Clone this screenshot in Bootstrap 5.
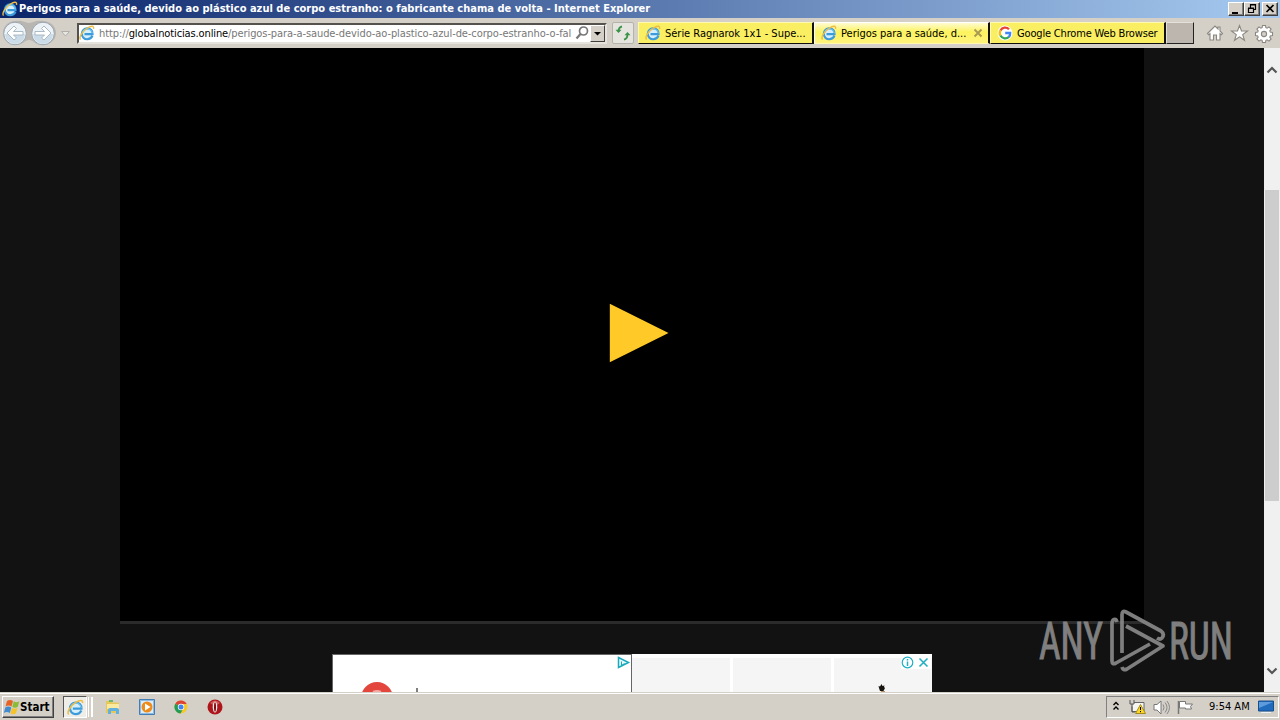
<!DOCTYPE html>
<html lang="pt">

<head>
  <meta charset="UTF-8" />
  <meta name="viewport" content="width=device-width, initial-scale=1.0" />
  <title>Internet Explorer</title>
  <link href="https://cdn.jsdelivr.net/npm/bootstrap@5.3.0/dist/css/bootstrap.min.css" rel="stylesheet" />
  <style>
    body {
      width: 1280px;
      height: 720px;
      font-family: "DejaVu Sans Condensed", "DejaVu Sans", sans-serif;
      font-stretch: condensed;
      font-size: 11px;
      line-height: 14px;
      color: #000;
      background: #d4d0c8;
    }
    svg { display: block; flex: none; }

    /* Title bar */
    .title-bar {
      height: 18px;
      padding: 0 2px;
      background: linear-gradient(90deg, #0a246a 0%, #a6caf0 100%);
    }
    .title-text { color: #fff; font-weight: bold; font-size: 11px; margin-left: 1px; letter-spacing: .02px; }
    .win-btn {
      width: 16px;
      height: 14px;
      background: #d4d0c8;
      border: 1px solid;
      border-color: #fff #404040 #404040 #fff;
      box-shadow: inset -1px -1px 0 #808080;
    }

    /* Toolbar */
    .tool-bar { height: 30px; background: #d4d0c8; }
    .address-box {
      flex: none;
      width: 530px;
      height: 21px;
      margin-left: 6px;
      background: #fff;
      border: 2px solid;
      border-color: #55524e #e6e3dd #e6e3dd #55524e;
    }
    .address-text { width: 474px; margin-left: 4px; padding-top: 2px; color: #777; letter-spacing: -.09px; }
    .address-text span { color: #000; letter-spacing: -.12px; }
    .drop-btn {
      width: 15px;
      height: 17px;
      background: #d4d0c8;
      border: 1px solid;
      border-color: #fff #404040 #404040 #fff;
    }
    .refresh-btn { flex: none; width: 22px; height: 22px; margin-left: 5px; border: 1px solid #b5b2ac; border-radius: 2px; background: #e6e4de; }
    .tab-row { flex: none; margin-left: 4px; }
    .page-tab {
      flex: none;
      width: 176px;
      height: 22px;
      padding-left: 6px;
      background: #faee62;
      border: 1px solid;
      border-color: #fff9b4 #111 #111 #fff9b4;
      border-right-width: 2px;
    }
    .page-tab.current { background: linear-gradient(#fffbd0, #fdf35e 45%, #fff37b); border-color: #fff #111 #fff6b0 #fff; }
    .tab-text { margin-left: 4px; padding-top: 2px; letter-spacing: -.02px; }
    .tab-text.tight { letter-spacing: -.17px; }
    .new-tab { width: 28px; height: 22px; background: #bdb6af; border: 1px solid; border-color: #e4e0da #222 #222 #e4e0da; }

    /* Page */
    .page-area { height: 644px; background: #121212; }
    .video-box { width: 1024px; height: 576px; margin-left: 120px; background: #000; border-bottom: 3px solid #2b2b2b; }
    .ad-row { width: 600px; height: 38px; margin: 30px 0 0 332px; background: #fff; }
    .ad-left { width: 300px; border: 1px solid #666; border-bottom: 0; }
    .ad-cells { width: 300px; background: #fff; padding-top: 4px; gap: 3px; }
    .ad-cells > div { background: #f5f5f5; flex: 1; }
    .play-mark { left: 609px; top: 255px; }
    .ad-info { left: 901px; top: 608px; }
    .run-logo { left: 1036px; top: 558px; opacity: .9; }
    .scroll-track { width: 16px; height: 644px; background: #f0f0f0; }
    .scroll-thumb { width: 14px; height: 311px; margin: 64px 0 0 1px; background: #cdcdcd; }

    /* Task bar */
    .task-bar { height: 28px; padding-top: 1px; background: #d4d0c8; border-top: 1px solid #d4d0c8; box-shadow: inset 0 1px 0 #fff; }
    .start-btn {
      width: 52px;
      height: 22px;
      margin-left: 2px;
      font-weight: bold;
      font-size: 11.5px;
      border: 1px solid;
      border-color: #fff #404040 #404040 #fff;
      box-shadow: inset -1px -1px 0 #808080;
    }
    .task-ie { width: 24px; height: 22px; margin-left: 9px; padding-left: 3px; background: #efede8; border: 1px solid; border-color: #555 #fff #fff #555; }
    .task-edge { width: 5px; height: 20px; margin-left: 1px; border-right: 2px solid #fff; border-left: 1px solid #fff; }
    .task-icons { gap: 18px; margin-left: 12px; }
    .tray-box { width: 173px; height: 22px; border: 1px solid; border-color: #808080 #fff #fff #808080; }
    .tray-clock { margin-left: 2px; }
  </style>
</head>

<body class="overflow-hidden">
  <svg width="0" height="0" class="position-absolute">
    <symbol id="ie" viewBox="0 0 16 16">
      <circle cx="8.200" cy="8.800" r="5" fill="#d7effb" />
      <path d="M13.500 10.800c-1 2.200-2.900 3.400-5.200 3.400-3.200 0-5.500-2.300-5.500-5.400s2.300-5.400 5.400-5.400c3.500 0 5.600 2.400 5.400 5.700H5.500" fill="none" stroke="#3b9bdb" stroke-width="2.100" />
      <path d="M3.200 8.500C3.500 5.500 5.500 3.800 8.300 3.800s4.600 1.700 5 4.500" fill="none" stroke="#86d4f6" stroke-width=".9" />
      <path d="M1.600 14.600C-.6 12.300 3.500 6.300 8.500 3c3.500-2.300 6.800-2.500 6 .9" fill="none" stroke="#edbd45" stroke-width="1.400" />
    </symbol>
  </svg>

  <!-- Title bar -->
  <div class="title-bar d-flex align-items-center">
    <svg width="16" height="16"><use href="#ie" /></svg>
    <div class="title-text text-nowrap">Perigos para a saúde, devido ao plástico azul de corpo estranho: o fabricante chama de volta - Internet Explorer</div>
    <div class="d-flex ms-auto">
      <div class="win-btn"><svg width="14" height="12"><path d="M3 9h6v2H3z" /></svg></div>
      <div class="win-btn"><svg width="14" height="12"><path d="M5.500 4.500V1.500h5v5H9M5 2h6M3.500 5.500h5v4h-5zM3 5h6" fill="none" stroke="#000" stroke-width="1.200" /></svg></div>
      <div class="win-btn" style="margin-left: 2px"><svg width="14" height="12"><path d="M3.500 2l7 7M10.500 2l-7 7" stroke="#000" stroke-width="1.700" /></svg></div>
    </div>
  </div>

  <!-- Toolbar -->
  <div class="tool-bar d-flex align-items-center">
    <svg width="71" height="30">
      <path d="M15 3c8-1 10 2 14 2s6-3 14-2a13 12 0 0 1 0 24c-8 0-10-5-14-5s-6 5-14 5A12 12 0 0 1 15 3z" fill="#b9b6b2" />
      <g fill="#edf2f6" stroke="#9aa5ae"><circle cx="15" cy="15.500" r="11.300" /><circle cx="43" cy="15.500" r="11.300" /></g>
      <path d="M5 16a10 10 0 0 0 20 0zM33 16a10 10 0 0 0 20 0z" fill="#cbdce8" />
      <g fill="#fff" stroke="#a3b3c0" stroke-width=".9"><path d="M7 15l7-7 2.500 2.500-3 3H23v3.500h-9.500l3 3L14 22z" /><path d="M51 15l-7-7-2.500 2.500 3 3H35v3.500h9.500l-3 3L44 22z" /></g>
      <path d="M61.500 13.500h8l-4 4.500z" fill="#e8e6e2" stroke="#b2aeab" />
    </svg>
    <div class="address-box d-flex align-items-center">
      <svg width="16" height="16"><use href="#ie" /></svg>
      <div class="address-text text-nowrap">http://<span>globalnoticias.online</span>/perigos-para-a-saude-devido-ao-plastico-azul-de-corpo-estranho-o-fal</div>
      <svg class="ms-auto" width="15" height="16"><circle cx="8.500" cy="6" r="4" fill="#fff" stroke="#777" stroke-width="1.700" /><path d="M5.500 9L1.500 13.500" stroke="#777" stroke-width="2.200" /></svg>
      <div class="drop-btn"><svg width="13" height="15"><path d="M3 6h7L6.500 9.500z" /></svg></div>
    </div>
    <div class="refresh-btn"><svg width="20" height="20" fill="none" stroke="#3a9348" stroke-width="1.800"><path d="M9 3.500Q5.500 4 5.500 9M11 16.500q3.500-.5 3.500-5.500" /><path d="M2.500 6.800h6L5.500 10zM11.500 12.200h6l-3-3.200z" fill="#3a9348" stroke="none" /></svg></div>
    <div class="tab-row d-flex">
      <div class="page-tab d-flex align-items-center"><svg width="16" height="16"><use href="#ie" /></svg><span class="tab-text text-nowrap">Série Ragnarok 1x1 - Supe...</span></div>
      <div class="page-tab current d-flex align-items-center"><svg width="16" height="16"><use href="#ie" /></svg><span class="tab-text text-nowrap">Perigos para a saúde, d...</span><svg class="ms-auto" style="margin-right: 5px" width="10" height="10"><path d="M1.500 1.500l7 7M8.500 1.500l-7 7" stroke="#a99b53" stroke-width="2" /></svg></div>
      <div class="page-tab d-flex align-items-center">
        <svg width="16" height="16" fill="none" stroke-width="2.300"><circle cx="8" cy="8" r="7.500" fill="#fff" /><path d="M12 4.200A5.300 5.300 0 0 0 3.500 5.500" stroke="#e94335" /><path d="M3.500 5.300a5.300 5.300 0 0 0 0 5.400" stroke="#fbbc05" /><path d="M3.500 10.500a5.300 5.300 0 0 0 8.500 1.300" stroke="#34a853" /><path d="M11.700 12A5 5 0 0 0 13.200 8H8.200" stroke="#4285f4" /></svg>
        <span class="tab-text tight text-nowrap">Google Chrome Web Browser</span>
      </div>
      <div class="new-tab"></div>
    </div>
    <svg class="ms-auto" width="70" height="20" fill="#fff" stroke="#8b8780" stroke-width="1.100">
      <path d="M1.500 10.500L9 3l3 3V4h2v4l2.500 2.500-1.200 1.200-1.300-1V17h-3.500v-5h-3v5H4v-6.300l-1.300 1z" />
      <path d="M33.500 2.500l2 5.500h6l-4.800 3.600 1.800 5.700-5-3.500-5 3.500 1.800-5.700L25.500 8h6z" />
      <path d="M56.500 2.500h3l.4 2.200 1.200.5 1.900-1.300 2.100 2.100-1.300 1.900.5 1.200 2.200.4v3l-2.200.4-.5 1.200 1.300 1.900-2.100 2.100-1.900-1.300-1.200.5-.4 2.200h-3l-.4-2.200-1.200-.5-1.900 1.300-2.100-2.100 1.300-1.900-.5-1.200-2.200-.4v-3l2.200-.4.5-1.200-1.300-1.900 2.100-2.100 1.900 1.300 1.200-.5z" />
      <circle cx="58" cy="11" r="2.600" fill="#d4d0c8" />
    </svg>
    <div style="width: 4px"></div>
  </div>

  <!-- Page -->
  <div class="page-area d-flex position-relative">
    <div class="flex-grow-1 overflow-hidden">
      <div class="video-box"></div>
      <div class="ad-row d-flex">
        <div class="ad-left bg-white d-flex">
          <svg width="298" height="37">
            <circle cx="44" cy="43" r="16" fill="#e2463c" />
            <path d="M40 37q4-2 8 0" fill="none" stroke="#f6aaa3" stroke-width="2" />
            <path d="M84 33v4" stroke="#555" stroke-width="1.500" />
            <path d="M285.500 2.500v10l10-5z" fill="#e8f9fb" stroke="#18a9bd" stroke-width="1.500" /><path d="M288.500 6.500v4l3-2" fill="none" stroke="#18a9bd" />
          </svg>
        </div>
        <div class="ad-cells d-flex"><div></div><div></div><div><svg width="98" height="34"><path d="M44.500 28l1.500.500 1.500-2.500 1 2 2-.500-.5 1.500 1 1-1.500 3h-3.500l-1-3z" fill="#181510" /><path d="M47 33h4v1h-4z" fill="#ba9266" /></svg></div></div>
      </div>
    </div>
    <div class="scroll-track d-flex flex-column">
      <svg style="margin-top: 14px" width="16" height="16"><path d="M3.500 10.500L8 6l4.500 4.500" fill="none" stroke="#555" stroke-width="2.200" /></svg>
      <div style="height: 48px"></div>
      <div class="scroll-thumb"></div>
      <svg class="mt-auto" width="16" height="30"><path d="M3.500 6.500L8 11l4.500-4.500" fill="none" stroke="#555" stroke-width="2.200" /></svg>
    </div>
    <svg class="play-mark position-absolute" width="61" height="60"><path d="M.8.800L59.500 30 .8 59.300z" fill="#ffca28" /></svg>
    <svg class="ad-info position-absolute" width="30" height="13" fill="none" stroke="#20b0c2"><path d="M0 0h30v13H0z" fill="#fff" stroke="none" /><circle cx="6.500" cy="6.500" r="5.300" stroke-width="1.200" /><path d="M6.500 5.500V10M6.500 3v1.500" stroke-width="1.500" /><path d="M18.500 2.500l8 8M26.500 2.500l-8 8" stroke-width="1.600" /></svg>
    <svg class="run-logo position-absolute" width="240" height="74" font-family="Roboto, sans-serif" font-size="52" fill="#8b8b8b" stroke="#8b8b8b" stroke-width="1">
      <text x="3" y="53" textLength="64" lengthAdjust="spacingAndGlyphs">ANY</text>
      <text x="133" y="53" textLength="64" lengthAdjust="spacingAndGlyphs">RUN</text>
      <g fill="none" stroke-width="3.700" stroke-linejoin="round">
        <path d="M81 16q-1-4-4-2-1 1-1 4v37q0 4 4 2l34-19" />
        <path d="M86 47V9q0-5 4-3l35 19q4 3 1 7-2 2-5 0" />
        <path d="M90 20l37 20-36 23q-4 2-5-2" />
      </g>
    </svg>
  </div>

  <!-- Task bar -->
  <div class="task-bar d-flex align-items-center">
    <div class="start-btn d-flex align-items-center">
      <svg width="17" height="18"><path d="M4 3q3-2 6 0L8.500 8.500q-3-2-6 0z" fill="#e66326" /><path d="M10.800 3.300q2.500 1.700 5.500 0l-1.500 5.500q-3 1.700-5.500 0z" fill="#8abb38" /><path d="M2.300 9.500q3-2 6 0l-1.500 5.500q-3-2-6 0z" fill="#428bcf" /><path d="M9 9.800q2.500 1.700 5.500 0L13 15.300q-3 1.700-5.500 0z" fill="#f4c327" /></svg>
      <span>Start</span>
    </div>
    <div class="task-ie d-flex align-items-center"><svg width="17" height="17"><use href="#ie" /></svg></div>
    <div class="task-edge"></div>
    <div class="task-icons d-flex">
      <svg width="16" height="16"><path d="M1 4V2h5l1 1.500h7V14H1z" fill="#e8c759" /><path d="M2 5h12v5H2z" fill="#f9eaa0" /><path d="M3 15v-4q0-2 2-2h7q2 0 2 2v4h-3v-3H6v3z" fill="#62b0dd" /><path d="M4 1h4v2H4z" fill="#6eb66b" /></svg>
      <svg width="16" height="16"><path d="M.5.500h15v15H.5z" fill="#8dbbe4" stroke="#427db5" /><path d="M2 2h12v12H2z" fill="#dcecf8" /><circle cx="8" cy="8" r="5.500" fill="#ed8c1d" /><path d="M6 4.500v7L11.500 8z" fill="#fff" /></svg>
      <svg width="16" height="16"><circle cx="8" cy="8" r="6.500" fill="#f6c928" /><path d="M8 8L2.300 4.700A6.500 6.500 0 0 1 13.700 5H8z" fill="#dc4437" /><path d="M8 8L2.300 4.700A6.500 6.500 0 0 0 7.500 14.500L10 10z" fill="#239a55" /><circle cx="8" cy="8" r="3.200" fill="#fff" /><circle cx="8" cy="8" r="2.500" fill="#4284ef" /></svg>
      <svg width="16" height="16"><circle cx="8" cy="8" r="7.500" fill="#ae151b" /><path d="M3 4Q8-1 13 4L10 6H6z" fill="#d15a58" /><ellipse cx="8" cy="8" rx="2.300" ry="5.500" fill="#f7eaea" /><ellipse cx="8" cy="8" rx="1" ry="4.800" fill="#7a1013" /></svg>
    </div>
    <div class="tray-box d-flex align-items-center ms-auto" style="margin-right: 1px">
      <svg width="100" height="20" fill="none" stroke="#000">
        <path d="M6.500 8L9 5.500 11.500 8M6.500 12.500L9 10l2.500 2.500" stroke-width="1.400" />
        <path d="M27 5.500h10v9H25v-5" fill="#f5f5f1" stroke="#666" /><path d="M23 3v4h4V3M25 7v8h3" stroke="#555" /><path d="M33.500 7.500l5 9h-10z" fill="#fbd729" stroke="#a58a1b" /><path d="M33.500 10v3M33.500 14v1.200" />
        <path d="M47 7.500h3L54 4v13l-4-4h-3z" fill="#fff" stroke="#777" /><path d="M56 7.500q2 3 0 6M58 5.500q4 5 0 10M60 4q5 6.500 0 13" stroke="#888" />
        <path d="M71.500 4v13" stroke="#777" stroke-width="1.500" /><path d="M72.500 4.500h6v2.500h7l-2 2.500 1 2.500h-6v-1h-6z" fill="#fff" stroke="#777" />
      </svg>
      <span class="tray-clock text-nowrap">9:54 AM</span>
      <svg class="ms-auto me-1" width="16" height="14"><path d="M.5 1h15v10H.5z" fill="#216bbd" stroke="#174f8e" /><path d="M1 2h14L1 8z" fill="#5c9cdc" /><path d="M3 12.500h10" stroke="#edf2f6" /></svg>
    </div>
  </div>

  <script src="https://cdn.jsdelivr.net/npm/bootstrap@5.3.0/dist/js/bootstrap.bundle.min.js"></script>
</body>

</html>
